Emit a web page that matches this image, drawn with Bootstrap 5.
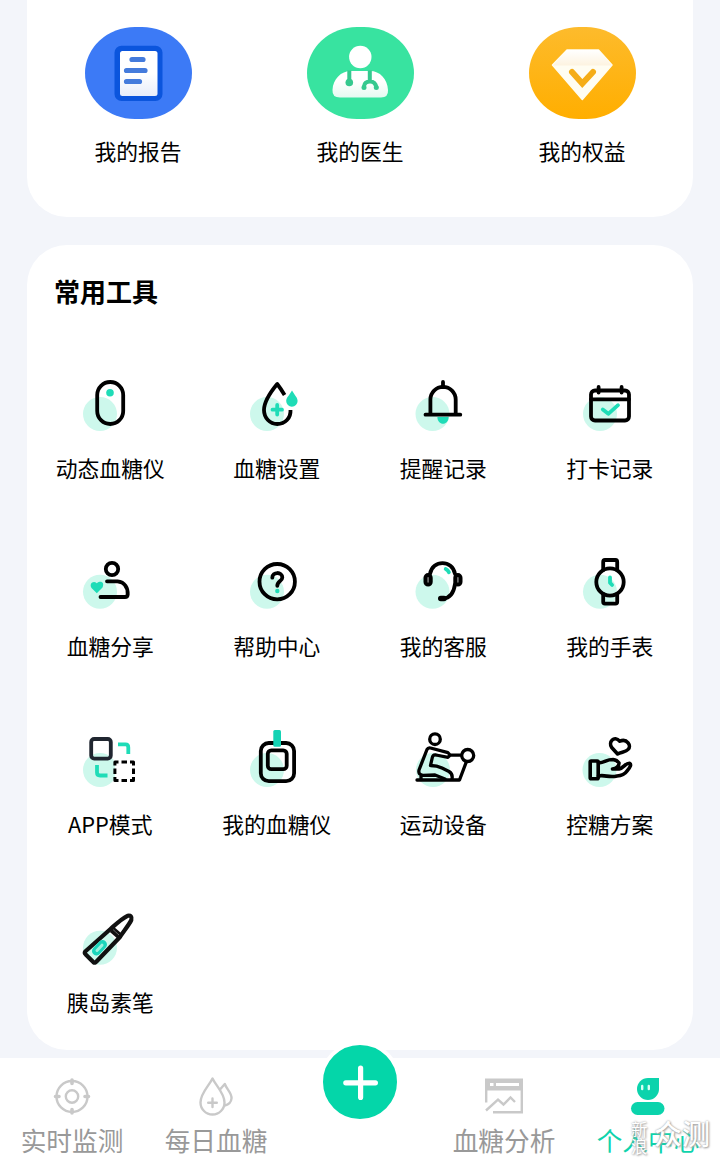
<!DOCTYPE html>
<html lang="zh-CN">
<head>
<meta charset="utf-8">
<meta name="viewport" content="width=device-width, initial-scale=1">
<title>个人中心</title>
<link href="https://cdn.jsdelivr.net/npm/bootstrap@5.3.0/dist/css/bootstrap.min.css" rel="stylesheet">
<style>
  body { background: #f3f5fa; color: #000; font-family: "Noto Sans CJK SC", sans-serif; font-size: 21.8px; line-height: 30px; height: 1166px; }
  .screen { width: 720px; height: 1166px; }
  .panel { margin: 0 27px; border-radius: 40px; background: #fff; }
  .panel-top { height: 217px; border-top-left-radius: 0; border-top-right-radius: 0; padding-top: 27px; }
  .panel-tools { height: 805px; margin-top: 28px; padding-top: 29px; }
  .blob { width: 107px; height: 92px; border-radius: 50px / 46px; }
  .blob-blue { background: #3c7af6; }
  .blob-green { background: #38e3a0; }
  .blob-gold { background: linear-gradient(#fdbb2c, #ffae00); }
  .blob + span { margin-top: 17px; }
  .panel-title { font-size: 26px; line-height: 34px; padding-left: 27px; }
  .tool-grid { margin-top: 60px; }
  .tool { height: 178px; }
  .tool svg { width: 72px; height: 72px; overflow: visible; fill: none; stroke: #000; stroke-width: 3.8; stroke-linecap: round; stroke-linejoin: round; }
  .tool svg .halo { fill: #cdf8ec; stroke: none; }
  .tool svg .mint { fill: #1fdcb7; stroke: none; }
  .tool svg .mint-line { stroke: #1fdcb7; }
  .tool span { margin-top: 13px; }
  .tabbar { height: 108px; margin-top: 8px; background: #fff; color: #999; font-size: 25.7px; line-height: 34px; }
  .tabbar .tab { width: 144px; height: 108px; padding-top: 18px; }
  .tabbar .tab > svg { width: 40px; height: 40px; fill: none; stroke: #c9c9c9; stroke-width: 2.4; stroke-linecap: round; }
  .tabbar .tab > span { margin-top: 7px; }
  .tabbar .tab-on { color: #0fd3ac; }
  .add-btn { width: 82px; height: 82px; top: -17px; left: 31px; background: #04d6a9; border: 4px solid #fff; }
  .stamp { right: 10px; top: 59px; color: #fff; text-shadow: 0 0 2px #999, 1px 1px 2px #aaa; }
  .stamp-small { width: 17px; font-size: 16.5px; line-height: 17px; margin-top: 4px; }
  .stamp-big { font-size: 28px; line-height: 32px; margin-left: 6px; font-weight: 500; }
</style>
</head>
<body>
<div class="screen position-relative overflow-hidden">
  <section class="panel panel-top">
    <div class="row g-0 text-center">
      <div class="col-4 d-flex flex-column align-items-center">
        <div class="blob blob-blue">
          <svg class="d-block" width="107" height="92" viewBox="0 0 107 92">
            <defs><linearGradient id="paper" x2="0" y2="1"><stop offset=".5" stop-color="#fff"/><stop offset="1" stop-color="#e8edfa"/></linearGradient></defs>
            <rect x="29.500" y="18.700" width="48" height="55.300" rx="7" fill="#0b55dd"/>
            <rect x="35" y="24" width="37.500" height="45" rx="2.500" fill="url(#paper)"/>
            <path d="M47 32.500H58M41.500 43.500H60M41.500 54.500H54.500" stroke="#447bdc" stroke-width="5.200" stroke-linecap="round"/>
          </svg>
        </div>
        <span>我的报告</span>
      </div>
      <div class="col-4 d-flex flex-column align-items-center">
        <div class="blob blob-green">
          <svg class="d-block" width="107" height="92" viewBox="0 0 107 92" fill="none">
            <defs><linearGradient id="coat" x2="0" y2="1"><stop offset=".4" stop-color="#fff"/><stop offset="1" stop-color="#e4faf1"/></linearGradient></defs>
            <circle cx="53.300" cy="30" r="11.200" fill="#fff"/>
            <path d="M25.500 63C26 52 34 44 44 44H63C73 44 80.500 52 81 63Q81.500 70.500 74 70.500H33Q25 70.500 25.500 63Z" fill="url(#coat)"/>
            <path d="M42.300 43.500V54M62.800 43.500V55M57 61V59.500Q57.500 54.500 63 54.500Q68.500 54.500 69.300 60.500" stroke="#35c98f" stroke-width="4"/>
            <circle cx="42.300" cy="55.500" r="3.800" fill="#35c98f"/>
            <circle cx="57" cy="60.500" r="2.500" fill="#35c98f"/><circle cx="69.300" cy="60.500" r="2.500" fill="#35c98f"/>
          </svg>
        </div>
        <span>我的医生</span>
      </div>
      <div class="col-4 d-flex flex-column align-items-center">
        <div class="blob blob-gold">
          <svg class="d-block" width="107" height="92" viewBox="0 0 107 92">
            <defs><linearGradient id="gem" x2="0" y2="1"><stop offset="0" stop-color="#fff"/><stop offset="1" stop-color="#fdf3e0"/></linearGradient></defs>
            <path d="M38 23H69.500L83 38L53.300 72.500L23.500 38Z" fill="#fffdf2" stroke="#fffdf2" stroke-width="1.500" stroke-linejoin="round"/>
            <path d="M38 23H69.500L83 38.500H24Z" fill="url(#gem)"/>
            <path d="M43 45L53.300 56.500L64 45" fill="none" stroke="#f5ad17" stroke-width="6" stroke-linecap="round"/>
          </svg>
        </div>
        <span>我的权益</span>
      </div>
    </div>
  </section>

  <section class="panel panel-tools">
    <h2 class="panel-title fw-bold m-0">常用工具</h2>
    <div class="tool-grid row g-0 text-center">
      <div class="tool col-3 d-flex flex-column align-items-center">
        <svg viewBox="-36 -36 72 72"><circle class="halo" cx="-10" cy="10" r="17"/><rect x="-12.800" y="-22" width="26" height="42" rx="13"/><circle class="mint" cx="0" cy="-11.300" r="3.800"/></svg>
        <span>动态血糖仪</span>
      </div>
      <div class="tool col-3 d-flex flex-column align-items-center">
        <svg viewBox="-36 -36 72 72"><circle class="halo" cx="-10" cy="10" r="17"/><path stroke-linecap="butt" d="M7.600-9Q4-15 .2-20Q-13-4-13 6C-13 14-7 20 .2 20C8 20 14 14 13.500 6"/><path class="mint-line" d="M.2 1V10.500M-4.500 5.700H5"/><path class="mint" d="M15-13.500C17.500-9 20.600-6.500 20.600-3A5.700 5.700 0 0 1 9.200-3C9.200-6.500 12.500-9 15-13.500Z"/></svg>
        <span>血糖设置</span>
      </div>
      <div class="tool col-3 d-flex flex-column align-items-center">
        <svg viewBox="-36 -36 72 72"><circle class="halo" cx="-10.500" cy="10" r="17"/><path class="mint" d="M-5.600 13H5.600C5.600 22-5.600 22-5.600 13Z"/><path d="M0-22V-17M-12.600 10V-4.500A12.650 12.650 0 0 1 12.700-4.500V10M-17.500 10.700H17.300"/></svg>
        <span>提醒记录</span>
      </div>
      <div class="tool col-3 d-flex flex-column align-items-center">
        <svg viewBox="-36 -36 72 72"><circle class="halo" cx="-10" cy="10" r="17"/><rect x="-19" y="-13.500" width="38" height="30" rx="4"/><path d="M-19-4.700H19M-11.400-17V-11.500M11.600-17V-11.500"/><path class="mint-line" d="M-7.200 5.500L-1.700 9.800L8 1.200"/></svg>
        <span>打卡记录</span>
      </div>

      <div class="tool col-3 d-flex flex-column align-items-center">
        <svg viewBox="-36 -36 72 72"><circle class="halo" cx="-10" cy="9.700" r="17"/><circle cx="2" cy="-13" r="6.200"/><path d="M-3-.7H7.500C15 0 18 6 17.700 12.500Q17.500 15 15 15H-9.500"/><path class="mint" d="M-13.200 11.200L-18.500 6C-21 2-17-2-13.200 1.200C-9.500-2-5 0-7.500 5.500Z"/></svg>
        <span>血糖分享</span>
      </div>
      <div class="tool col-3 d-flex flex-column align-items-center">
        <svg viewBox="-36 -36 72 72"><circle class="halo" cx="-10" cy="9.700" r="17"/><circle cx=".2" cy="-.3" r="17.700"/><path d="M-4.700-4.300C-4.700-10.500 5.300-10.500 5.300-4.500C5.300-.8 .3-1 .3 3.800"/><circle class="mint" cx=".3" cy="9" r="2.200"/></svg>
        <span>帮助中心</span>
      </div>
      <div class="tool col-3 d-flex flex-column align-items-center">
        <svg viewBox="-36 -36 72 72"><circle class="halo" cx="-10.500" cy="9.700" r="17"/><path d="M-13-8C-10.500-22.500 9.500-22.500 12-8M12 2C11 10 7 16 0 16.700"/><rect x="-17.600" y="-7" width="5.400" height="9.600" rx="2.700" fill="#777"/><rect x="12.200" y="-7" width="5.400" height="9.600" rx="2.700" fill="#777"/><path stroke-width="5.600" d="M-2.200 16.500H1"/><path class="mint-line" d="M2.700-13Q5-12 5.900-9.800"/></svg>
        <span>我的客服</span>
      </div>
      <div class="tool col-3 d-flex flex-column align-items-center">
        <svg viewBox="-36 -36 72 72"><circle class="halo" cx="-10" cy="9.700" r="17"/><path d="M-6.800-12V-20Q-6.800-22 -5-22H5.500Q7.200-22 7.200-20V-12M-6.800 12V19.800Q-6.800 21.700-5 21.700H5.500Q7.200 21.700 7.200 19.800V12"/><circle r="13.700"/><path class="mint-line" d="M0-4.700V.8L2.100 3"/></svg>
        <span>我的手表</span>
      </div>

      <div class="tool col-3 d-flex flex-column align-items-center">
        <svg viewBox="-36 -36 72 72"><circle class="halo" cx="-10" cy="10" r="17"/><rect x="-18.800" y="-21" width="19.600" height="19.600" rx="3" stroke="#202630"/><rect x="4.900" y="2" width="18.600" height="18.600" fill="#fff" stroke="none"/><path stroke-width="3" stroke-linecap="butt" d="M4.900 5.500V2H8.500M20 2H23.500V5.500M23.500 17V20.600H20M8.500 20.600H4.900V17M11.500 2H17M11.500 20.600H17M4.900 8.500V14M23.500 8.500V14"/><path class="mint-line" stroke-linecap="butt" d="M8-15.600H15.500Q18.300-15.600 18.300-12.500V-6M-13 5V12.500Q-13 15.500-10 15.500H-2.500"/></svg>
        <span>APP模式</span>
      </div>
      <div class="tool col-3 d-flex flex-column align-items-center">
        <svg viewBox="-36 -36 72 72"><circle class="halo" cx="-10" cy="10" r="17"/><rect x="-16.200" y="-17" width="33.300" height="38.200" rx="8"/><rect x="-9.200" y="-9.700" width="18.900" height="18.900" rx="3.500"/><rect x="-3.700" y="-30" width="7.700" height="16.700" rx="1.500" fill="#14d3b4" stroke="none"/></svg>
        <span>我的血糖仪</span>
      </div>
      <div class="tool col-3 d-flex flex-column align-items-center">
        <svg viewBox="-36 -36 72 72"><g stroke-width="3.300"><circle class="halo" cx="-10" cy="10" r="17"/><circle cx="-8" cy="-20.800" r="5.300"/><path d="M-16-10.500Q-15-12.500-12.500-12L5-7.300Q8-5 5-2.700L-7-5Q-10-5.500-10.700-2.500L-12.500 5.500Q-6 5.500-1 8L6 11.500Q10 14 9 19M-16-10.500L-24 10Q-25 15-20 15.300L-8 15Q-3 17 2 19M-22 16V19.500"/><path d="M-26 20H16.500L23.300 2M7-4.800H18"/><circle cx="24.700" cy="-4.500" r="6"/></g></svg>
        <span>运动设备</span>
      </div>
      <div class="tool col-3 d-flex flex-column align-items-center">
        <svg viewBox="-36 -36 72 72"><g stroke-width="3.600"><circle class="halo" cx="-10.500" cy="10" r="17"/><rect x="-19.800" y="1" width="8" height="17.700" rx="1"/><path d="M-11.500 3C-4 2-4-.5 3-.5Q7 0 9 3Q9 8 2.500 9H9C14 8 15 3 19.500 3.200Q22.500 5 17 11Q14 15.500 7 16C-1 18-5 14.500-11.500 16"/><path d="M7.600-6L1.700-12.500C-2-18 4-25 9.800-18.800C17-22 22-14 18-10.500C16-8 11-8 7.600-6Z"/></g></svg>
        <span>控糖方案</span>
      </div>

      <div class="tool col-3 d-flex flex-column align-items-center">
        <svg viewBox="-36 -36 72 72"><circle class="halo" cx="-10" cy="9.700" r="17"/><g stroke="#111" stroke-width="4.200"><path d="M.500-9L-24.500 13.200Q-26 15-24.300 16.500L-16.500 24.300Q-15 25.500-13.500 23.500L9.500-.5C13-6 19-13 21.300-18Q22.500-23 17.500-22.200C11-19 5-13 .5-9Z"/><path stroke-width="6.500" stroke-linecap="butt" d="M2-8.500L9.500-2"/><path stroke="#aaa" stroke-width="1" stroke-dasharray="1.500 1.200" stroke-linecap="butt" d="M3.500-8L9-3"/></g><path stroke-width="9" stroke="#1bd5bb" d="M-13.500 13L-7.500 6.500"/><path stroke-width="3" stroke="#9cf2df" d="M-13 12.500L-8 7.200"/></svg>
        <span>胰岛素笔</span>
      </div>
    </div>
  </section>

  <nav class="tabbar d-flex position-relative">
    <div class="tab d-flex flex-column align-items-center">
      <svg viewBox="-20 -20 40 40"><g transform="translate(0 .5)"><circle r="15.500"/><circle r="6.200"/><path stroke-width="3.600" d="M0-16.500V-13M0 13V16.500M-16.500 0H-13M13 0H16.500"/></g></svg>
      <span>实时监测</span>
    </div>
    <div class="tab d-flex flex-column align-items-center">
      <svg viewBox="-20 -20 40 40"><path d="M-3.500-17.500C-7-10-15.500-3-15.500 6.500A12 12 0 0 0 8.500 6.500C8.500-3 0-10-3.500-17.500ZM4-6.500L8.800-12C11-6 16-3 15.500 2.500Q15 8 8.800 9.500M-3.500 2.500V11M-7.800 6.700H.8" stroke-linejoin="round"/></svg>
      <span>每日血糖</span>
    </div>
    <div class="tab position-relative">
      <button class="add-btn position-absolute rounded-circle p-0 d-flex align-items-center justify-content-center" aria-label="添加">
        <svg width="36" height="36" viewBox="-18 -18 36 36"><path d="M0-14.800V14.800M-14.800 0H14.800" transform="translate(.6 .8)" stroke="#fff" stroke-width="5.200" stroke-linecap="round"/></svg>
      </button>
    </div>
    <div class="tab d-flex flex-column align-items-center">
      <svg viewBox="-20 -20 40 40"><g stroke-linecap="butt"><path stroke="none" fill="#c9c9c9" d="M-19-17.500H19V-5.500H-19Z"/><path stroke="#fff" stroke-width="3.200" d="M-14-11.500H-10.500M-8-11.500H15"/><path d="M-17.800-6V6.500M17.800-6V16.200H-11M-18 14.500L-6 3.500L-.5 8.500L6.500 1.500L11 6"/></g></svg>
      <span>血糖分析</span>
    </div>
    <div class="tab tab-on d-flex flex-column align-items-center">
      <svg viewBox="-20 -20 40 40"><g stroke="none" fill="#0bd3ac"><path d="M11-18V-7A11 11 0 1 1 0-18Z"/><rect x="-17" y="6" width="33.500" height="13" rx="6.500"/></g><path stroke="#d8fff5" stroke-width="2.400" d="M-5.800-10V-7M.8-10V-7"/></svg>
      <span>个人中心</span>
    </div>
    <div class="stamp position-absolute d-flex">
      <div class="stamp-small">新浪</div>
      <div class="stamp-big">众测</div>
    </div>
  </nav>
</div>
<script src="https://cdn.jsdelivr.net/npm/bootstrap@5.3.0/dist/js/bootstrap.bundle.min.js"></script>
</body>
</html>
